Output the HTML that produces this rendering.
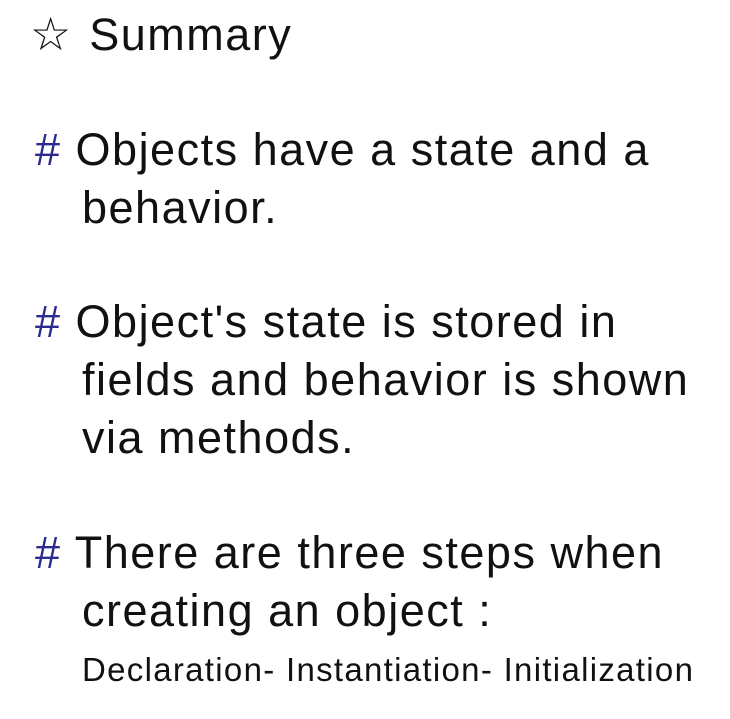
<!DOCTYPE html>
<html><head><style>
body{margin:0;width:730px;height:719px;background:#fff;overflow:hidden;font-family:"Liberation Sans","DejaVu Sans",sans-serif;color:#111;}
.l{position:absolute;white-space:nowrap;font-size:45px;line-height:58px;letter-spacing:1.5px;}
.h{color:#2a2a90;}
</style></head><body>
<div class="l" style="left:30px;top:5px"><span style="font-size:46px;letter-spacing:0">☆</span><span style="margin-left:18px">Summary</span></div>
<div class="l" style="left:35px;top:121px"><span class="h">#</span> Objects have a state and a</div>
<div class="l" style="left:82px;top:179px">behavior.</div>
<div class="l" style="left:35px;top:293px"><span class="h">#</span> Object's state is stored in</div>
<div class="l" style="left:82px;top:351px">fields and behavior is shown</div>
<div class="l" style="left:82px;top:409px">via methods.</div>
<div class="l" style="left:35px;top:524px"><span class="h">#</span> There are three steps when</div>
<div class="l" style="left:82px;top:582px">creating an object :</div>
<div class="l" style="left:82px;top:648px;font-size:33px;line-height:44px;letter-spacing:1.3px">Declaration- Instantiation- Initialization</div>
</body></html>
